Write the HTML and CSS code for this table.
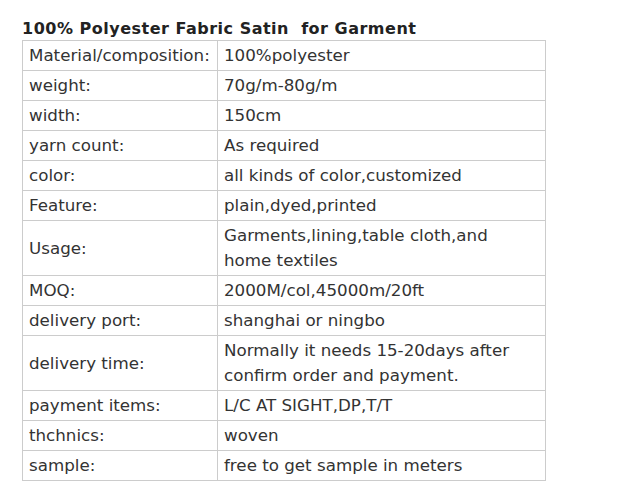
FILE: index.html
```html
<!DOCTYPE html>
<html>
<head>
<meta charset="utf-8">
<link rel="stylesheet" href="styles.css">
</head>
<body>
<div class="wrap">
  <h1 class="title">100% Polyester Fabric Satin&nbsp; for Garment</h1>
  <table class="spec">
    <tr><td class="k">Material/composition:</td><td>100%polyester</td></tr>
    <tr><td class="k">weight:</td><td>70g/m-80g/m</td></tr>
    <tr><td class="k">width:</td><td>150cm</td></tr>
    <tr><td class="k">yarn count:</td><td>As required</td></tr>
    <tr><td class="k">color:</td><td>all kinds of color,customized</td></tr>
    <tr><td class="k">Feature:</td><td>plain,dyed,printed</td></tr>
    <tr><td class="k">Usage:</td><td>Garments,lining,table cloth,and home textiles</td></tr>
    <tr><td class="k">MOQ:</td><td>2000M/col,45000m/20ft</td></tr>
    <tr><td class="k">delivery port:</td><td>shanghai or ningbo</td></tr>
    <tr><td class="k">delivery time:</td><td>Normally it needs 15-20days after confirm order and payment.</td></tr>
    <tr><td class="k">payment items:</td><td>L/C AT SIGHT,DP,T/T</td></tr>
    <tr><td class="k">thchnics:</td><td>woven</td></tr>
    <tr><td class="k">sample:</td><td>free to get sample in meters</td></tr>
  </table>
</div>
</body>
</html>
```
FILE: styles.css
```css
html, body {
  margin: 0;
  padding: 0;
  background: #fff;
}
.wrap {
  padding: 19px 0 0 22px;
  font-family: "DejaVu Sans", Verdana, sans-serif;
  color: #333;
}
.title {
  margin: 0;
  font-size: 16px;
  letter-spacing: 0.5px;
  font-weight: bold;
  line-height: 20px;
  height: 21px;
  color: #222;
}
.spec {
  border-collapse: collapse;
  width: 524px;
  font-size: 16.7px;
  table-layout: fixed;
}
.spec td {
  border: 1px solid #ccc;
  padding: 2px 10px 2px 6px;
  line-height: 25px;
  height: 25px;
  vertical-align: middle;
}
.spec td.k {
  width: 178px;
}
```
